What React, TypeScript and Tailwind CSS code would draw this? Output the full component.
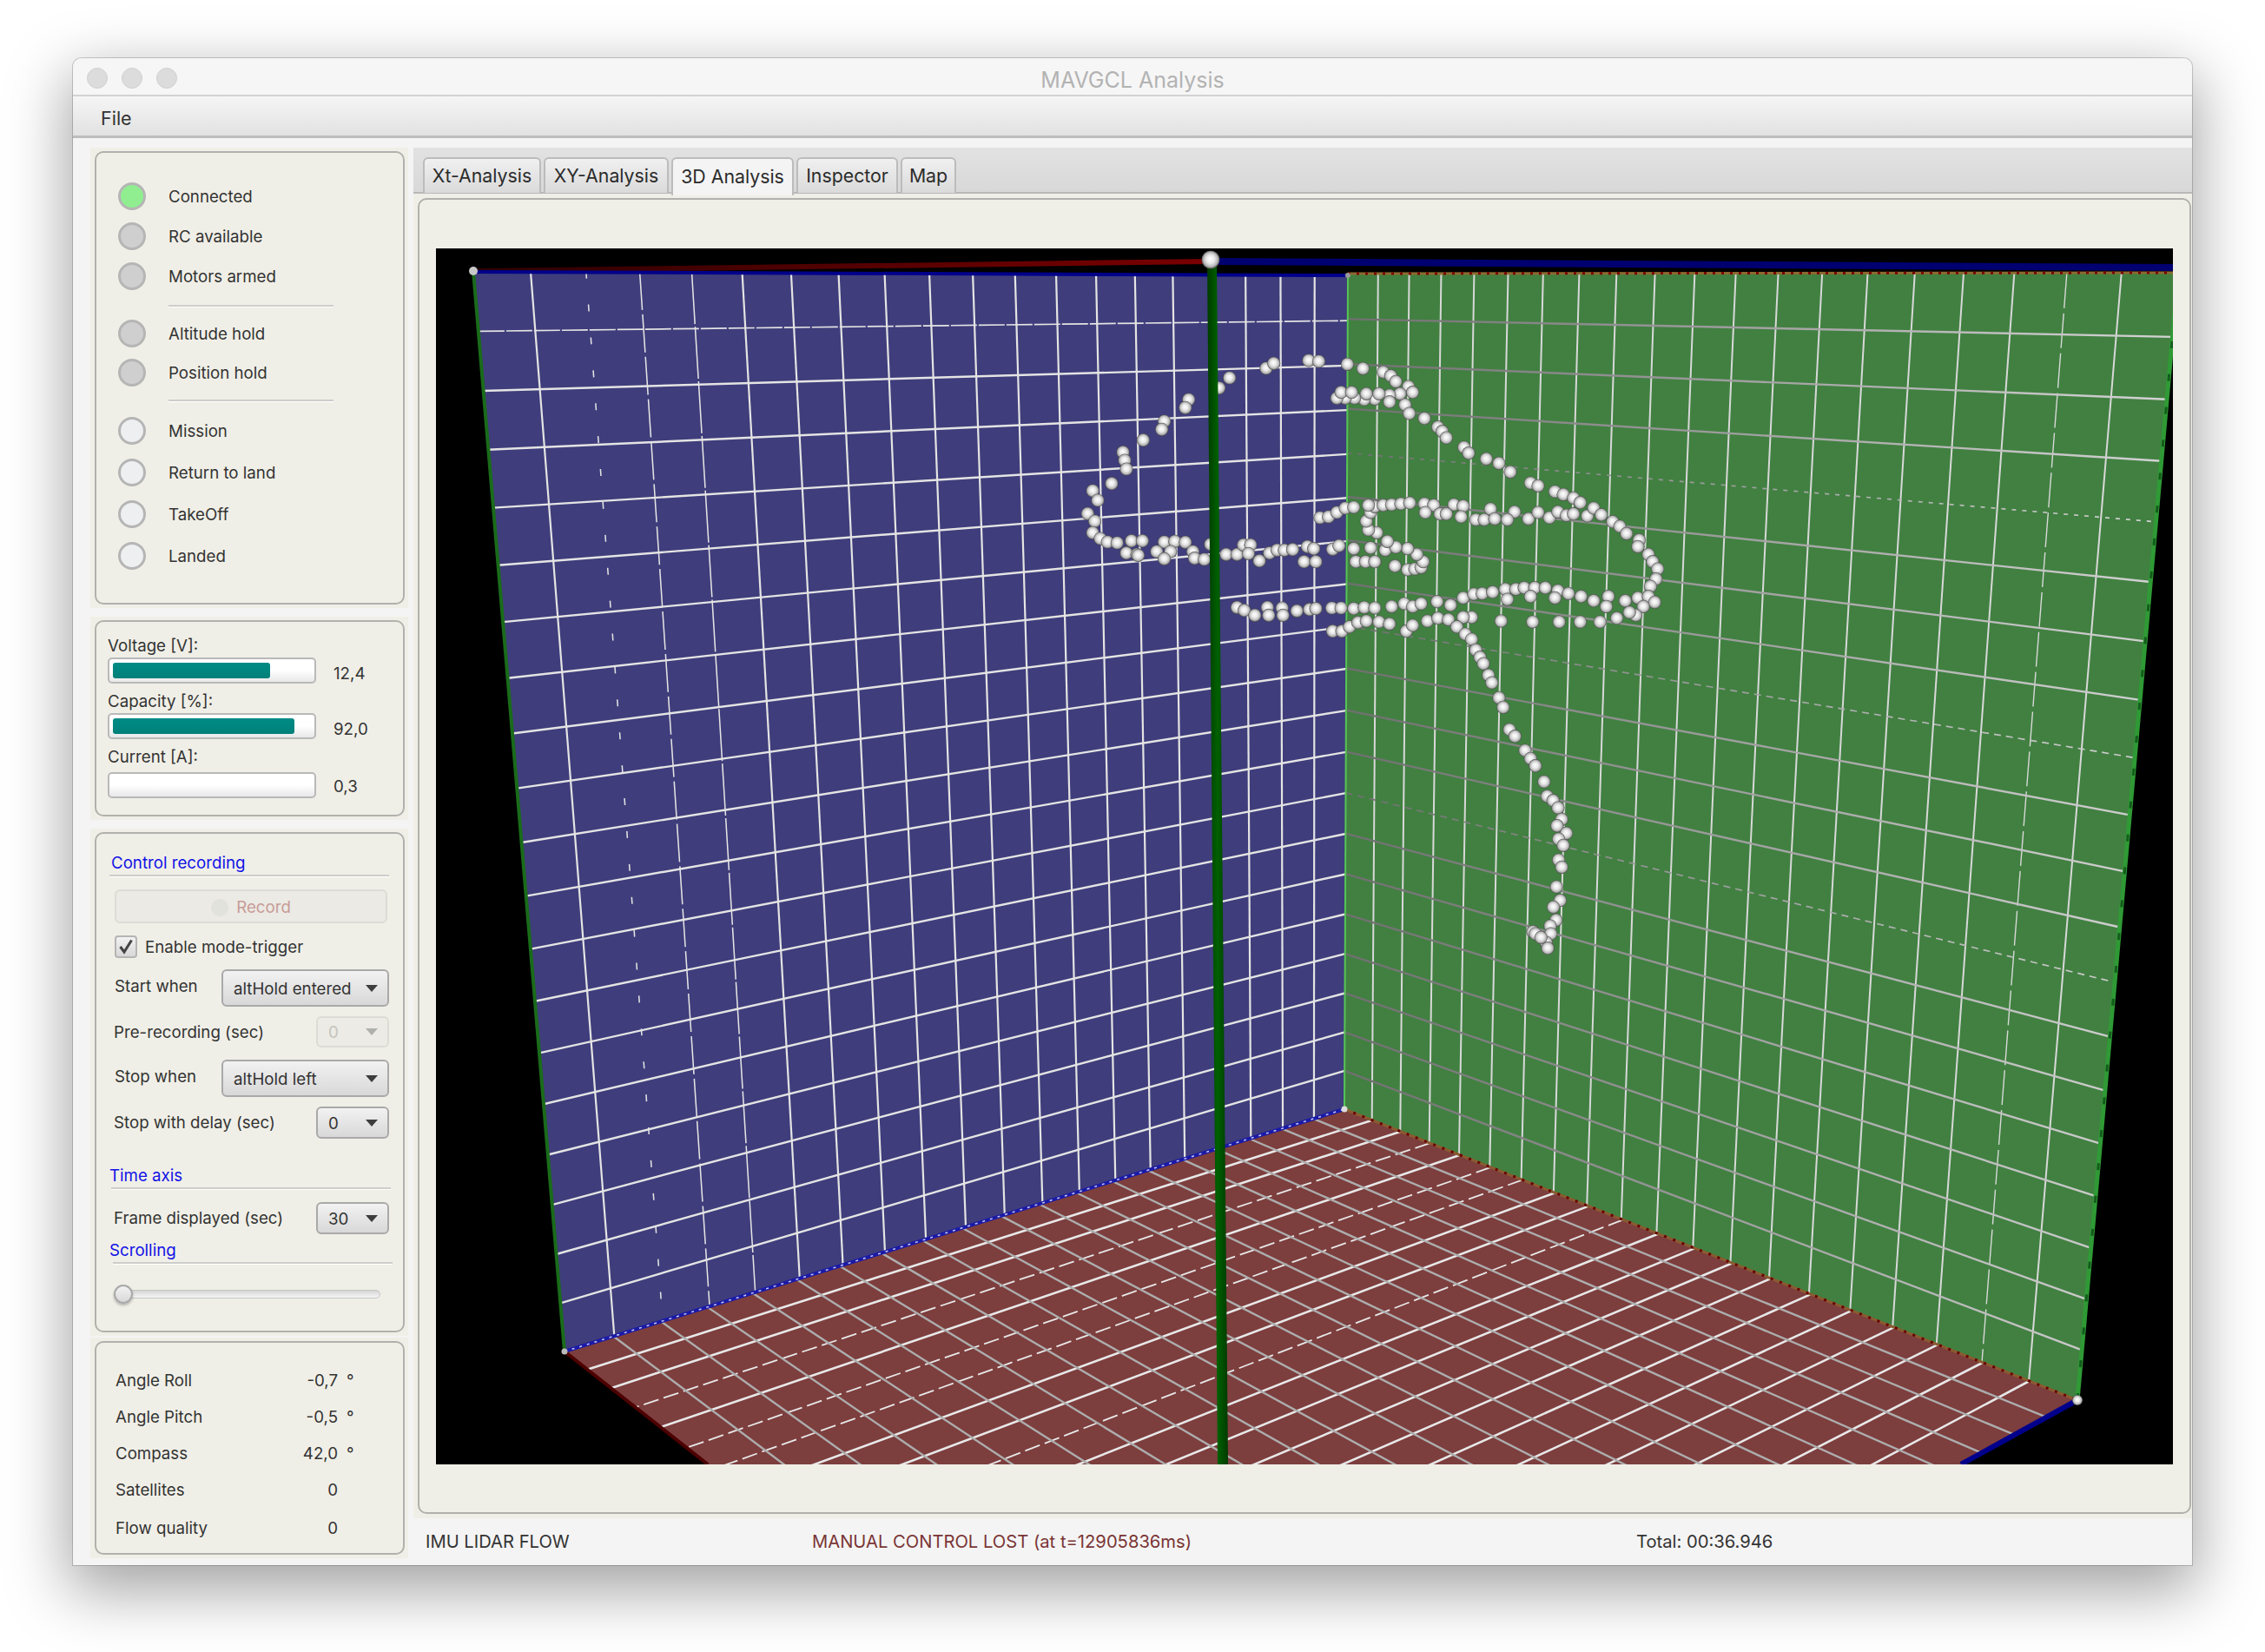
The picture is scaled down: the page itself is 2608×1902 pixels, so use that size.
import React from "react";

type P = [number, number];

function quad(p0: P, p1: P, p2: P, p3: P) {
  const dx1 = p1[0] - p2[0], dx2 = p3[0] - p2[0], sx = p0[0] - p1[0] + p2[0] - p3[0];
  const dy1 = p1[1] - p2[1], dy2 = p3[1] - p2[1], sy = p0[1] - p1[1] + p2[1] - p3[1];
  const den = dx1 * dy2 - dx2 * dy1;
  const g = (sx * dy2 - dx2 * sy) / den;
  const h = (dx1 * sy - sx * dy1) / den;
  const a = p1[0] - p0[0] + g * p1[0], b = p3[0] - p0[0] + h * p3[0], c = p0[0];
  const d = p1[1] - p0[1] + g * p1[1], e = p3[1] - p0[1] + h * p3[1], f = p0[1];
  return (u: number, v: number): P => {
    const w = g * u + h * v + 1;
    return [(a * u + b * v + c) / w, (d * u + e * v + f) / w];
  };
}

const BLUE: P[] = [[43, 26], [1050, 31], [1046, 991], [148, 1270]];
const GREEN: P[] = [[1050, 29], [2006, 29], [1890, 1326], [1046, 991]];
const FLOOR: P[] = [[1046, 991], [1890, 1326], [908, 1869], [148, 1270]];

const pts = (q: P[]) => q.map((p) => p.join(",")).join(" ");
const indices = Array.from({ length: 19 }, (_, i) => i + 1);

type Dash = Record<number, string>;

function Grid({ q, u, v, uDash = {}, vDash = {}, uw = 2, vw = 2.4 }: { q: P[]; u: string; v: string; uDash?: Dash; vDash?: Dash; uw?: number; vw?: number }) {
  const m = quad(q[0], q[1], q[2], q[3]);
  return (
    <g>
      {indices.map((i) => {
        const a = m(i / 20, 0), b = m(i / 20, 1);
        return <line key={"u" + i} x1={a[0]} y1={a[1]} x2={b[0]} y2={b[1]} stroke={u} strokeWidth={uDash[i] ? uw * 0.7 : uw} strokeDasharray={uDash[i]} />;
      })}
      {indices.map((i) => {
        const a = m(0, i / 20), b = m(1, i / 20);
        return <line key={"v" + i} x1={a[0]} y1={a[1]} x2={b[0]} y2={b[1]} stroke={v} strokeWidth={vDash[i] ? vw * 0.7 : vw} strokeDasharray={vDash[i]} />;
      })}
    </g>
  );
}

const Z5: P[] = [
  [445,165],[420,200],[348,240],[340,268],[290,315],[284,343],[240,380],[192,422],[196,450],[200,480],[165,530],[120,555],[132,588],[108,634],[125,660],[120,700],[138,720],[155,732],[178,735],[212,728],[238,728],[290,732],[315,730],[340,733],[200,770],[225,775],[228,778],[272,765],[305,765],[290,790],[358,765],[362,788],[385,792],[400,740],[437,775],[463,775],[478,742],[495,742],[490,772],[516,797],[540,770],[558,760],[575,760],[595,758],[630,748],[645,755],[622,800],[650,800],[690,757],[705,745],[740,755],[745,800],[768,800],[790,800],[780,752],[815,760],[838,815],[868,828],[885,825],[900,820],[905,800],[890,775],[868,755],[840,750],[820,730],[795,700],[775,690],[770,660],[780,630],[790,610],[810,605],[830,603],[852,600],[873,597],[908,600],[930,605],[978,603],[1000,608],[1065,618],[1122,628],[910,630],[945,635],[960,635],[995,645],[1030,655],[1050,655],[1075,652],[1105,655],[1155,652],[1178,630],[1205,648],[1225,628],[1245,640],[1262,635],[1295,642],[1310,615],[1328,638],[1355,662],[1372,678],[1388,703],[1418,725],[1415,748],[1440,775],[1450,800],[1462,825],[1458,860],[1445,885],
  [660,648],[680,645],[700,630],[720,615],[740,612],[775,605],
  [532,132],[550,115],[633,105],[657,108],[725,118],[762,133],[810,145],[828,158],[840,178],[870,195],[880,215],[850,220],[825,225],[790,238],[825,248],[765,240],[742,235],[720,235],[700,235],[710,215],[735,215],[770,220],[800,220],[862,258],[872,288],[908,305],[940,335],[950,350],[960,372],[1002,405],[1013,425],[1055,445],[1085,460],[1112,490],[1160,528],[1178,538],[1218,558],[1238,568],[1262,580],[1278,596],
  [463,958],[480,968],[505,985],[535,958],[538,985],[570,960],[572,985],[605,970],[635,965],[650,962],[688,960],[710,960],[740,962],[765,958],[790,960],[830,955],[860,945],[880,955],[900,945],[938,938],[970,950],[1000,925],[1025,912],[1045,910],[1070,905],[1100,895],[1125,895],[1145,890],[1170,890],[1195,890],[1225,900],[1250,910],[1280,920],[1310,935],[1345,920],[1385,935],[1415,925],[1440,920],[1455,940],[1428,955],[1410,985],[1395,975],[1365,995],[1325,1008],[1278,1008],[1228,1008],[1165,1008],[1090,1005],[1020,992],[1000,992],[1105,930],[1160,920],[1218,925],[1340,955],
  [690,1040],[712,1040],[730,1025],[750,1010],[770,1005],[800,1008],[825,1015],[865,1040],[880,1020],[915,1005],[940,995],[965,1000],[985,1025],[1005,1050],[1020,1068],[1030,1105],[1040,1130],[1048,1152],[1060,1192],[1068,1218],[1085,1270],[1095,1303],[1110,1380],[1123,1403],[1147,1452],[1160,1480],
];
const Z6: P[] = [
  [1030,695],[1058,750],[1068,800],[1087,815],[1103,840],[1115,880],[1100,902],[1130,928],[1105,948],[1120,970],[1105,1020],[1115,1045],[1098,1113],[1110,1160],[1088,1183],[1097,1228],[1078,1248],[1080,1275],[1065,1305],[1070,1325],[1022,1268],[1030,1275],[1048,1288],
];
const BALLS: P[] = [
  ...Z5.map(([x, y]): P => [698 + x / 2.063, 94 + y / 3]),
  ...Z6.map(([x, y]): P => [898 + x / 2.8, 364 + y / 3]),
];

function Scene() {
  return (
    <svg width="2000" height="1400" viewBox="0 0 2000 1400" className="block bg-black shrink-0">
      <defs>
        <radialGradient id="ball" cx="50%" cy="50%" r="50%" fx="48%" fy="44%">
          <stop offset="0%" stopColor="#ffffff" />
          <stop offset="45%" stopColor="#e8e8e8" />
          <stop offset="80%" stopColor="#b4b4b4" />
          <stop offset="100%" stopColor="#4a4a4a" />
        </radialGradient>
        <linearGradient id="pole" x1="0" x2="1" y1="0" y2="0">
          <stop offset="0%" stopColor="#003a00" />
          <stop offset="50%" stopColor="#006000" />
          <stop offset="100%" stopColor="#003a00" />
        </linearGradient>
        <linearGradient id="greenH" gradientUnits="userSpaceOnUse" x1="1050" y1="0" x2="2000" y2="0">
          <stop offset="0%" stopColor="#6f6f6f" />
          <stop offset="100%" stopColor="#d4d4d4" />
        </linearGradient>
        <linearGradient id="redAxis" x1="0" x2="1" y1="0" y2="0">
          <stop offset="0%" stopColor="#2c0000" />
          <stop offset="100%" stopColor="#7a0000" />
        </linearGradient>
      </defs>
      <polygon points={pts(FLOOR)} fill="#7d3e3e" />
      <Grid q={FLOOR} u="#e8e8e8" v="#adadad" uDash={{ 3: "18 6", 5: "18 6", 6: "18 6", 9: "18 6" }} uw={2.6} vw={2.4} />
      <polygon points={pts(BLUE)} fill="#3f3d7b" />
      <Grid q={BLUE} u="#e4e4e4" v="#e4e4e4" uDash={{ 2: "8 30", 3: "44 5", 4: "60 3" }} vDash={{ 1: "30 2" }} uw={2.2} />
      <polygon points={pts(GREEN)} fill="#418041" />
      <Grid q={GREEN} u="#d8d8d8" v="url(#greenH)" uDash={{ 18: "40 6" }} vDash={{ 4: "5 7", 8: "8 6", 12: "8 6" }} uw={2} vw={2.4} />

      <line x1="43" y1="26" x2="892" y2="15" stroke="url(#redAxis)" strokeWidth="6" />
      <line x1="892" y1="15" x2="2000" y2="22" stroke="#000070" strokeWidth="8" />
      <line x1="43" y1="27" x2="1050" y2="31" stroke="#00008b" strokeWidth="4" />
      <line x1="1050" y1="29" x2="2006" y2="28" stroke="#8b6a30" strokeWidth="3" />
      <line x1="1050" y1="29" x2="2006" y2="28" stroke="#7a0000" strokeWidth="3" strokeDasharray="3 7" />
      <line x1="43" y1="26" x2="148" y2="1270" stroke="#1a6b1a" strokeWidth="4" />
      <line x1="1050" y1="31" x2="1046" y2="991" stroke="#56c456" strokeWidth="2" />
      <line x1="148" y1="1270" x2="1046" y2="991" stroke="#1a1aa8" strokeWidth="4" />
      <line x1="148" y1="1270" x2="1046" y2="991" stroke="#c8c8f0" strokeWidth="1.5" strokeDasharray="3 6" />
      <line x1="1046" y1="991" x2="1890" y2="1326" stroke="#8a5a30" strokeWidth="3" />
      <line x1="1046" y1="991" x2="1890" y2="1326" stroke="#6a0000" strokeWidth="3" strokeDasharray="3 8" />
      <line x1="148" y1="1270" x2="313" y2="1400" stroke="#4d0000" strokeWidth="4" />
      <line x1="1890" y1="1326" x2="1756" y2="1400" stroke="#00008b" strokeWidth="6" />
      <line x1="1890" y1="1326" x2="2006" y2="29" stroke="#2f9a35" strokeWidth="5" />
      <line x1="1890" y1="1326" x2="2006" y2="29" stroke="#145c1c" strokeWidth="3" strokeDasharray="8 30" />

      {BALLS.map(([x, y], i) => (
        <circle key={i} cx={x} cy={y} r="7.6" fill="url(#ball)" />
      ))}
      <polygon points="888,15 899,15 912,1400 900,1400" fill="url(#pole)" />
      <circle cx="892" cy="13" r="10.5" fill="url(#ball)" />
      <circle cx="43" cy="26" r="5" fill="#c8c8c8" />
      <circle cx="1890" cy="1326" r="6" fill="url(#ball)" />
      <circle cx="1046" cy="991" r="3.5" fill="#dddddd" />
      <circle cx="148" cy="1270" r="3.5" fill="#bbbbbb" />
      <circle cx="1050" cy="31" r="3" fill="#999999" />
    </svg>
  );
}

function Led({ label, state, cls }: { label: string; state: "on" | "grey" | "off"; cls: string }) {
  const fill = state === "on" ? "bg-[#90ee90]" : state === "grey" ? "bg-[#cfcfcf]" : "bg-[#eeeff0]";
  return (
    <div className={"flex items-center h-[32px] ml-[25px] gap-[26px] " + cls}>
      <span className={"w-[32px] h-[32px] rounded-full border-[3px] border-[#b5b5b5] " + fill} />
      <span className="pt-[1px]">{label}</span>
    </div>
  );
}

function Divider({ cls }: { cls: string }) {
  return <div className={"h-[3px] border-t-2 border-[#cdcdcb] bg-white " + cls} />;
}

function Bar({ fill }: { fill?: string }) {
  return (
    <div className="w-[240px] h-[30px] rounded-[5px] border-2 border-[#b9b9b9] bg-gradient-to-b from-[#ffffff] via-[#ffffff] to-[#e8e8e8] p-[4px]">
      {fill ? <div className={"h-[18px] rounded-[3px] bg-gradient-to-b from-[#008b85] to-[#00807a] " + fill} /> : null}
    </div>
  );
}

function Heading({ text, cls }: { text: string; cls: string }) {
  return <div className={"h-[24px] pt-[1px] text-[#1212e6] " + cls}>{text}</div>;
}

function Arrow({ faded }: { faded?: boolean }) {
  return (
    <svg width="14" height="8" viewBox="0 0 14 8" className="absolute right-[11px] top-1/2 -translate-y-1/2">
      <polygon points="0,0 14,0 7,8" fill={faded ? "#b0b0ac" : "#3d3d3d"} />
    </svg>
  );
}

function Select({ text, w, h, disabled }: { text: string; w: string; h: string; disabled?: boolean }) {
  return (
    <div
      className={
        "relative flex items-center pl-[12px] pt-[2px] rounded-[6px] border-2 " +
        w + " " + h + " " +
        (disabled
          ? "border-[#dcdcd6] bg-[#ecebe5] text-[#c4c4be]"
          : "border-[#a9a9a9] bg-gradient-to-b from-[#f2f2f2] to-[#d8d8d8] text-[#333333]")
      }
    >
      {text}
      <Arrow faded={disabled} />
    </div>
  );
}

function Panel({ outer, children }: { outer: string; children: React.ReactNode }) {
  return (
    <div className={"bg-[#f0efe7] pt-[4px] pb-[4px] pl-[5px] pr-[4px] " + outer}>
      <div className="h-full rounded-[10px] border-2 border-[#b1b1ad]">{children}</div>
    </div>
  );
}

function Row({ label, value, unit, cls }: { label: string; value: string; unit?: boolean; cls: string }) {
  return (
    <div className={"flex h-[24px] pt-[1px] ml-[22px] " + cls}>
      <div className="w-[256px] flex justify-between">
        <span>{label}</span>
        <span>{value}</span>
      </div>
      {unit ? <span className="ml-[10px]">°</span> : null}
    </div>
  );
}

function Tab({ text, w, active }: { text: string; w: string; active?: boolean }) {
  return (
    <div
      className={
        "flex items-center justify-center pb-[2px] rounded-t-[6px] border-2 border-b-0 border-[#bcbcbc] text-[21.3px] text-[#2b2b2b] " +
        w + " " +
        (active ? "h-[44px] bg-[#f4f4f4] relative z-10" : "h-[41px] bg-gradient-to-b from-[#f0f0f0] to-[#dadada]")
      }
    >
      {text}
    </div>
  );
}

export default function App() {
  return (
    <div className="min-h-[1902px] bg-white pt-[67px] pl-[84px]" style={{ fontFamily: "Inter, 'Liberation Sans', sans-serif" }}>
      <div className="w-[2440px] h-[1735px] rounded-t-[10px] bg-[#f4f4f4] flex flex-col text-[18.7px] leading-[24px] text-[#333333] shadow-[0_0_0_1px_rgba(0,0,0,0.18),0_24px_70px_6px_rgba(0,0,0,0.36)]">
        <div className="relative h-[44px] shrink-0 rounded-t-[10px] bg-[#f6f6f6] border-b-2 border-[#d2d2d2] flex items-center justify-center pt-[7px]">
          <div className="absolute left-[16px] top-[11px] flex gap-[16px]">
            <span className="w-[24px] h-[24px] rounded-full bg-[#dcdcdc] border border-[#d0d0d0]" />
            <span className="w-[24px] h-[24px] rounded-full bg-[#dcdcdc] border border-[#d0d0d0]" />
            <span className="w-[24px] h-[24px] rounded-full bg-[#dcdcdc] border border-[#d0d0d0]" />
          </div>
          <span className="text-[25px] text-[#b3b3b3]">MAVGCL Analysis</span>
        </div>
        <div className="h-[48px] shrink-0 flex items-center pl-[32px] pt-[5px] text-[21.5px] bg-gradient-to-b from-[#f5f5f5] to-[#e2e2e2] border-b-[3px] border-[#bdbdbd]">
          File
        </div>
        <div className="flex flex-1 pt-[11px] min-h-0">
          <div className="w-[366px] ml-[20px] flex flex-col shrink-0">
            <Panel outer="h-[530px]">
              <Led label="Connected" state="on" cls="mt-[34px]" />
              <Led label="RC available" state="grey" cls="mt-[14px]" />
              <Led label="Motors armed" state="grey" cls="mt-[14px]" />
              <Divider cls="mt-[17px] ml-[83px] w-[190px]" />
              <Led label="Altitude hold" state="grey" cls="mt-[14px]" />
              <Led label="Position hold" state="grey" cls="mt-[13px]" />
              <Divider cls="mt-[15px] ml-[83px] w-[190px]" />
              <Led label="Mission" state="off" cls="mt-[17px]" />
              <Led label="Return to land" state="off" cls="mt-[16px]" />
              <Led label="TakeOff" state="off" cls="mt-[16px]" />
              <Led label="Landed" state="off" cls="mt-[16px]" />
            </Panel>
            <Panel outer="h-[234px] mt-[10px]">
              <div className="ml-[13px]">
                <div className="mt-[14px] h-[24px] pt-[2px]">Voltage [V]:</div>
                <div className="mt-[3px] h-[30px] flex items-center gap-[20px]">
                  <Bar fill="w-[181px]" />
                  <span className="mt-[7px]">12,4</span>
                </div>
                <div className="mt-[7px] h-[24px] pt-[2px]">Capacity [%]:</div>
                <div className="mt-[3px] h-[30px] flex items-center gap-[20px]">
                  <Bar fill="w-[209px]" />
                  <span className="mt-[7px]">92,0</span>
                </div>
                <div className="mt-[7px] h-[24px] pt-[2px]">Current [A]:</div>
                <div className="mt-[7px] h-[30px] flex items-center gap-[20px]">
                  <Bar />
                  <span className="mt-[4px]">0,3</span>
                </div>
              </div>
            </Panel>
            <Panel outer="h-[584px] mt-[10px]">
              <Heading text="Control recording" cls="mt-[21px] ml-[17px]" />
              <Divider cls="mt-[2px] ml-[15px] w-[322px]" />
              <div className="mt-[14px] ml-[21px] w-[314px] h-[39px] rounded-[6px] border-2 border-[#dcdcd6] bg-[#ebeae4] flex items-center justify-center gap-[9px] pt-[2px] text-[#c89c98]">
                <span className="w-[20px] h-[20px] rounded-full bg-[#e2e2dd]" />
                <span>Record</span>
              </div>
              <div className="mt-[14px] ml-[21px] h-[26px] flex items-center gap-[9px]">
                <span className="w-[26px] h-[26px] rounded-[4px] border-2 border-[#b5b5b5] bg-gradient-to-b from-[#f2f2f2] to-[#d8d8d8] flex items-center justify-center">
                  <svg width="18" height="18" viewBox="0 0 18 18">
                    <path d="M2.5 9 L7 15 L15.5 1.5" fill="none" stroke="#444444" strokeWidth="3" />
                  </svg>
                </span>
                <span className="pt-[2px]">Enable mode-trigger</span>
              </div>
              <div className="mt-[13px] ml-[21px] w-[316px] flex items-center justify-between">
                <span className="mb-[4px]">Start when</span>
                <Select text="altHold entered" w="w-[193px]" h="h-[43px]" />
              </div>
              <div className="mt-[11px] ml-[20px] w-[317px] flex items-center justify-between">
                <span className="pt-[2px]">Pre-recording (sec)</span>
                <Select text="0" w="w-[84px]" h="h-[36px]" disabled />
              </div>
              <div className="mt-[14px] ml-[21px] w-[316px] flex items-center justify-between">
                <span className="mb-[4px]">Stop when</span>
                <Select text="altHold left" w="w-[193px]" h="h-[43px]" />
              </div>
              <div className="mt-[11px] ml-[20px] w-[317px] flex items-center justify-between">
                <span className="pt-[1px]">Stop with delay (sec)</span>
                <Select text="0" w="w-[84px]" h="h-[37px]" />
              </div>
              <Heading text="Time axis" cls="mt-[30px] ml-[15px]" />
              <Divider cls="mt-[2px] ml-[17px] w-[322px]" />
              <div className="mt-[14px] ml-[20px] w-[317px] flex items-center justify-between">
                <span className="pt-[1px]">Frame displayed (sec)</span>
                <Select text="30" w="w-[84px]" h="h-[37px]" />
              </div>
              <Heading text="Scrolling" cls="mt-[6px] ml-[15px]" />
              <Divider cls="mt-[2px] ml-[19px] w-[322px]" />
              <div className="relative mt-[23px] ml-[20px] w-[307px] h-[22px] flex items-center">
                <div className="w-full h-[10px] rounded-full border border-[#c4c4c4] bg-gradient-to-b from-[#d6d6d6] to-[#f6f6f6]" />
                <span className="absolute left-0 top-0 w-[22px] h-[22px] rounded-full border-2 border-[#a8a8a8] bg-gradient-to-b from-[#f2f2f2] to-[#d8d8d8] shadow-[0_2px_3px_rgba(0,0,0,0.25)]" />
              </div>
            </Panel>
            <Panel outer="h-[254px] mt-[2px]">
              <Row label="Angle Roll" value="-0,7" unit cls="mt-[31px]" />
              <Row label="Angle Pitch" value="-0,5" unit cls="mt-[18px]" />
              <Row label="Compass" value="42,0" unit cls="mt-[18px]" />
              <Row label="Satellites" value="0" cls="mt-[18px]" />
              <Row label="Flow quality" value="0" cls="mt-[20px]" />
            </Panel>
          </div>
          <div className="w-[2048px] ml-[6px] flex flex-col min-w-0">
            <div className="h-[53px] shrink-0 bg-gradient-to-b from-[#e2e2e2] to-[#d8d8d8] border-b-2 border-[#b8b8b8] pt-[11px] pl-[11px] flex items-start gap-[3px]">
              <Tab text="Xt-Analysis" w="w-[136px]" />
              <Tab text="XY-Analysis" w="w-[144px]" />
              <Tab text="3D Analysis" w="w-[141px]" active />
              <Tab text="Inspector" w="w-[117px]" />
              <Tab text="Map" w="w-[64px]" />
            </div>
            <div className="h-[1525px] shrink-0 bg-[#f0efe7] pt-[5px] pb-[5px] pl-[5px] pr-[1px]">
              <div className="h-full rounded-[10px] border-2 border-[#b1b1ad] pt-[56px] pl-[19px]">
                <Scene />
              </div>
            </div>
            <div className="h-[54px] shrink-0 flex items-center pl-[14px] text-[20.2px]">
              <span className="w-[445px]">IMU LIDAR FLOW</span>
              <span className="w-[949px] text-[#7a3535]">MANUAL CONTROL LOST (at t=12905836ms)</span>
              <span>Total: 00:36.946</span>
            </div>
          </div>
        </div>
      </div>
    </div>
  );
}
